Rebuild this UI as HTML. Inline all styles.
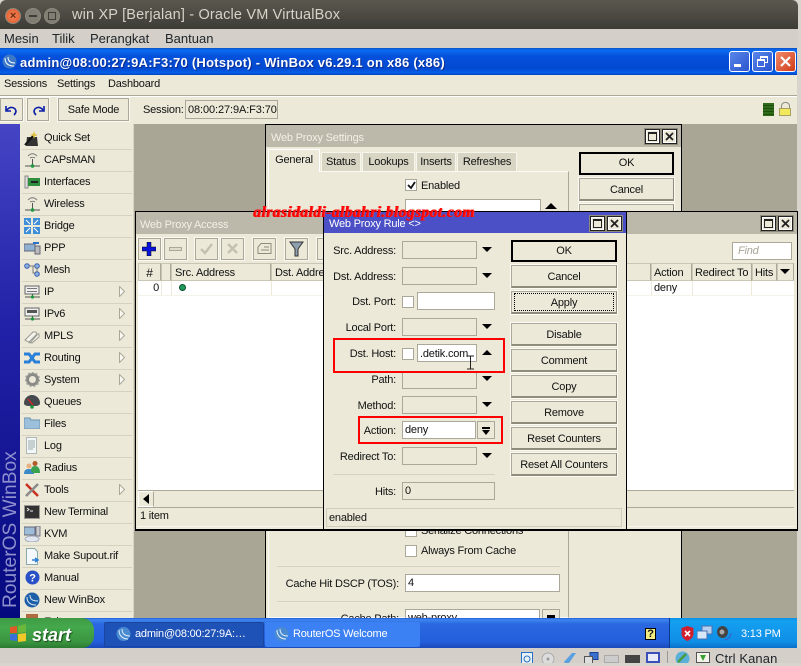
<!DOCTYPE html>
<html><head><meta charset="utf-8"><style>
html,body{margin:0;padding:0}
body{width:801px;height:663px;overflow:hidden;position:relative;background:#d8d5ce;font:11px "Liberation Sans",sans-serif;letter-spacing:-.2px;color:#111}
div,span,svg{position:absolute;box-sizing:border-box}
.t{white-space:nowrap;line-height:14px}
.r{text-align:right}
.c{text-align:center}
.m{left:44px;white-space:nowrap;line-height:14px;color:#111}
.sep{left:22px;width:110px;height:1px;background:#d5d2c2}
.a{left:119px;width:6px;height:11px}
.f{background:#ece9d8;border:1px solid #aca899;height:18px}
.w{background:#fff;border:1px solid #aca899;height:18px}
.b{background:#ece9d8;border:1px solid #aca899;border-right-color:#8f8c7c;border-bottom:2px solid #8f8c7c;box-shadow:0 0 0 1px #fbfaf4;text-align:center;line-height:22px;height:23px;left:511px;width:106px}
.tb{background:#ece9d8;border:1px solid #aca899;box-shadow:0 0 0 1px #f9f8f1;height:22px;top:238px}
.h{top:263px;height:18px;background:#ece9d8;border:1px solid #c9c6b6;border-right-color:#aca899;line-height:18px;padding-left:3px;white-space:nowrap;overflow:hidden}
.ck{background:#fff;border:1px solid #aca899;width:12px;height:12px}
.tri{width:0;height:0;border-left:5px solid transparent;border-right:5px solid transparent;border-top:5px solid #000;left:482px}
.wb{width:15px;height:15px;background:#ece9d8;border:1px solid #222;box-shadow:0 0 0 1px #8f8c7c,inset 0 0 0 1px #fff}
</style></head><body>

<!-- Ubuntu title -->
<div style="left:0;top:0;width:798px;height:29px;background:linear-gradient(#5b584e,#3d3c37);border-radius:6px 6px 0 0"></div>
<div style="left:5px;top:8px;width:16px;height:16px;border-radius:50%;background:radial-gradient(#f4825a,#e05a28);border:1px solid #8d8a80"></div>
<div class="t c" style="left:5px;top:9px;width:16px;font-size:11px;color:#6a2a10;font-weight:bold">×</div>
<div style="left:25px;top:8px;width:16px;height:16px;border-radius:50%;background:#807d72;border:1px solid #8d8a80"></div>
<div style="left:29px;top:15px;width:8px;height:2px;background:#3f3d37"></div>
<div style="left:44px;top:8px;width:16px;height:16px;border-radius:50%;background:#807d72;border:1px solid #8d8a80"></div>
<div style="left:48px;top:12px;width:8px;height:8px;border:1px solid #3f3d37"></div>
<div class="t" style="left:72px;top:7px;font-size:14.5px;color:#d6d3c8;letter-spacing:.17px;line-height:16px">win XP [Berjalan] - Oracle VM VirtualBox</div>

<!-- VB menu -->
<div style="left:0;top:29px;width:798px;height:19px;background:#d4d0c9"></div>
<div class="t" style="left:4px;top:32px;font-size:13px;letter-spacing:0;color:#20262c">Mesin</div>
<div class="t" style="left:52px;top:32px;font-size:13px;letter-spacing:0;color:#20262c">Tilik</div>
<div class="t" style="left:90px;top:32px;font-size:13px;letter-spacing:0;color:#20262c">Perangkat</div>
<div class="t" style="left:165px;top:32px;font-size:13px;letter-spacing:0;color:#20262c">Bantuan</div>

<!-- XP title -->
<div style="left:0;top:48px;width:797px;height:27px;background:linear-gradient(#0a4fc4 0,#0a6cf0 8%,#0551dc 30%,#0349d0 75%,#0560ea 92%,#0440b8 100%)"></div>
<svg style="left:2px;top:54px" width="15" height="15"><circle cx="7.500" cy="7.500" r="7" fill="#3b78c8"/><path d="M3 4c0 5 3 8 9 8M6 3c0 4 2 6 7 6" stroke="#fff" fill="none"/></svg>
<div class="t" style="left:20px;top:56px;font-size:13px;font-weight:bold;color:#fff;text-shadow:1px 1px 0 #0a2c90;letter-spacing:.25px">admin@08:00:27:9A:F3:70 (Hotspot) - WinBox v6.29.1 on x86 (x86)</div>
<div style="left:729px;top:51px;width:21px;height:21px;background:linear-gradient(135deg,#5a86e8,#2a55d0);border:1px solid #fff;border-radius:3px"></div>
<div style="left:734px;top:64px;width:7px;height:3px;background:#fff"></div>
<div style="left:752px;top:51px;width:21px;height:21px;background:linear-gradient(135deg,#5a86e8,#2a55d0);border:1px solid #fff;border-radius:3px"></div>
<div style="left:760px;top:56px;width:8px;height:7px;border:1px solid #fff;border-top-width:2px"></div>
<div style="left:757px;top:59px;width:8px;height:8px;border:1px solid #fff;border-top-width:2px;background:#3e68dc"></div>
<div style="left:775px;top:51px;width:21px;height:21px;background:linear-gradient(135deg,#f08a6a,#d03c18);border:1px solid #fff;border-radius:3px"></div>
<svg style="left:779px;top:55px" width="13" height="13"><path d="M2 2l9 9M11 2l-9 9" stroke="#fff" stroke-width="2.200"/></svg>

<!-- Winbox menu + toolbar -->
<div style="left:0;top:75px;width:797px;height:49px;background:#ece9d8"></div>
<div style="left:0;top:95px;width:797px;height:1px;background:#aca899"></div>
<div style="left:0;top:96px;width:797px;height:1px;background:#fff"></div>
<div class="t" style="left:4px;top:77px">Sessions</div>
<div class="t" style="left:57px;top:77px">Settings</div>
<div class="t" style="left:108px;top:77px">Dashboard</div>
<div style="left:0;top:98px;width:23px;height:23px;border:1px solid #aca899;box-shadow:0 0 0 1px #f9f8f1"></div>
<svg style="left:4px;top:103px" width="15" height="13"><path d="M2 3v5h5M3 7c3-4 8-3 9 1c0 2-1 3-2 4" stroke="#0a1ea8" stroke-width="1.600" fill="none"/></svg>
<div style="left:27px;top:98px;width:22px;height:23px;border:1px solid #aca899;box-shadow:0 0 0 1px #f9f8f1"></div>
<svg style="left:31px;top:103px" width="15" height="13"><path d="M13 3v5h-5M12 7c-3-4-8-3-9 1c0 2 1 3 2 4" stroke="#0a1ea8" stroke-width="1.600" fill="none"/></svg>
<div class="c t" style="left:58px;top:98px;width:71px;height:23px;border:1px solid #aca899;box-shadow:0 0 0 1px #f9f8f1;line-height:22px">Safe Mode</div>
<div class="t" style="left:143px;top:103px">Session:</div>
<div class="t" style="left:185px;top:100px;width:93px;height:19px;border:1px solid #aca899;line-height:18px;padding-left:2px;letter-spacing:-.1px">08:00:27:9A:F3:70</div>
<div style="left:763px;top:103px;width:11px;height:13px;background:repeating-linear-gradient(#2f6a1a 0,#2f6a1a 2px,#1f4f10 2px,#1f4f10 3px)"></div>
<div style="left:781px;top:102px;width:9px;height:9px;border:1.500px solid #8a8a80;border-radius:4px 4px 0 0"></div>
<div style="left:779px;top:108px;width:12px;height:8px;background:#f2e85c;border:1px solid #a8a060"></div>

<!-- MDI -->
<div style="left:134px;top:124px;width:663px;height:494px;background:#a9a696"></div>

<!-- Sidebar -->
<div style="left:0;top:124px;width:20px;height:494px;background:linear-gradient(#4444c4,#2222a8 40%,#05097e)"></div>
<div class="t" style="left:-70px;top:516px;width:162px;height:22px;transform:rotate(-90deg);font-size:19.2px;line-height:22px;color:#8d90cc;text-align:left;letter-spacing:0">RouterOS WinBox</div>
<div style="left:20px;top:124px;width:114px;height:494px;background:#ece9d8;border-right:1px solid #d8d5c4"></div>
<div class="sep" style="top:149px"></div><div class="sep" style="top:171px"></div><div class="sep" style="top:193px"></div><div class="sep" style="top:215px"></div><div class="sep" style="top:237px"></div><div class="sep" style="top:259px"></div><div class="sep" style="top:281px"></div><div class="sep" style="top:303px"></div><div class="sep" style="top:325px"></div><div class="sep" style="top:347px"></div><div class="sep" style="top:369px"></div><div class="sep" style="top:391px"></div><div class="sep" style="top:413px"></div><div class="sep" style="top:435px"></div><div class="sep" style="top:457px"></div><div class="sep" style="top:479px"></div><div class="sep" style="top:501px"></div><div class="sep" style="top:523px"></div><div class="sep" style="top:545px"></div><div class="sep" style="top:567px"></div><div class="sep" style="top:589px"></div><div class="sep" style="top:611px"></div>
<div class="m" style="top:131px">Quick Set</div>
<div class="m" style="top:153px">CAPsMAN</div>
<div class="m" style="top:175px">Interfaces</div>
<div class="m" style="top:197px">Wireless</div>
<div class="m" style="top:219px">Bridge</div>
<div class="m" style="top:241px">PPP</div>
<div class="m" style="top:263px">Mesh</div>
<div class="m" style="top:285px">IP</div>
<div class="m" style="top:307px">IPv6</div>
<div class="m" style="top:329px">MPLS</div>
<div class="m" style="top:351px">Routing</div>
<div class="m" style="top:373px">System</div>
<div class="m" style="top:395px">Queues</div>
<div class="m" style="top:417px">Files</div>
<div class="m" style="top:439px">Log</div>
<div class="m" style="top:461px">Radius</div>
<div class="m" style="top:483px">Tools</div>
<div class="m" style="top:505px">New Terminal</div>
<div class="m" style="top:527px">KVM</div>
<div class="m" style="top:549px">Make Supout.rif</div>
<div class="m" style="top:571px">Manual</div>
<div class="m" style="top:593px">New WinBox</div>
<div class="m" style="top:615px">Exit</div>
<svg class="a" style="top:286px" viewBox="0 0 6 11"><path d="M.5.500L5.500 5.500L.5 10.500Z" fill="#fafaf2" stroke="#aca899"/></svg>
<svg class="a" style="top:308px" viewBox="0 0 6 11"><path d="M.5.500L5.500 5.500L.5 10.500Z" fill="#fafaf2" stroke="#aca899"/></svg>
<svg class="a" style="top:330px" viewBox="0 0 6 11"><path d="M.5.500L5.500 5.500L.5 10.500Z" fill="#fafaf2" stroke="#aca899"/></svg>
<svg class="a" style="top:352px" viewBox="0 0 6 11"><path d="M.5.500L5.500 5.500L.5 10.500Z" fill="#fafaf2" stroke="#aca899"/></svg>
<svg class="a" style="top:374px" viewBox="0 0 6 11"><path d="M.5.500L5.500 5.500L.5 10.500Z" fill="#fafaf2" stroke="#aca899"/></svg>
<svg class="a" style="top:484px" viewBox="0 0 6 11"><path d="M.5.500L5.500 5.500L.5 10.500Z" fill="#fafaf2" stroke="#aca899"/></svg>

<!-- Sidebar icons -->
<svg style="left:24px;top:129px" width="17" height="18"><path d="M3 8h10l1 9H2Z" fill="#333"/><path d="M1 16L9 7" stroke="#111" stroke-width="2"/><path d="M10 2l1 3 3 1-3 1-1 3-1-3-3-1 3-1Z" fill="#e0c040"/></svg>
<svg style="left:24px;top:153px" width="17" height="15"><path d="M4 3c3-3 6-3 9 0M6 5c2-1 3-1 5 0" stroke="#777" fill="none"/><path d="M8.500 6v6M1 13h15" stroke="#555"/><circle cx="8.500" cy="13" r="1.800" fill="#1a9a3a"/></svg>
<svg style="left:24px;top:175px" width="17" height="14"><path d="M1 1h3v12H1z" fill="#ddd" stroke="#888"/><path d="M4 3h12v8H4z" fill="#2f8f3f"/><path d="M7 6h7v2H7z" fill="#222"/></svg>
<svg style="left:24px;top:197px" width="17" height="15"><path d="M4 3c3-3 6-3 9 0M6 5c2-1 3-1 5 0" stroke="#777" fill="none"/><path d="M8.500 6v6M1 13h15" stroke="#555"/><circle cx="8.500" cy="13" r="1.800" fill="#1a9a3a"/></svg>
<svg style="left:24px;top:218px" width="16" height="16"><path d="M0 0h7v7H0zM9 0h7v7H9zM0 9h7v7H0zM9 9h7v7H9z" fill="#3f8fd8"/><path d="M2 2l4 4M14 2l-4 4M2 14l4-4M14 14l-4-4" stroke="#fff"/></svg>
<svg style="left:24px;top:241px" width="17" height="14"><path d="M0 3h11v7H0z" fill="#8fb0d0" stroke="#667"/><path d="M11 5h5v8h-5z" fill="#bbb" stroke="#667"/><path d="M9 2h6" stroke="#2a70c8" stroke-width="2"/></svg>
<svg style="left:24px;top:263px" width="16" height="14"><circle cx="3" cy="3" r="2.300" fill="#8ab0e0" stroke="#3a5fb0"/><circle cx="13" cy="3" r="2.300" fill="#8ab0e0" stroke="#3a5fb0"/><circle cx="13" cy="11" r="2.300" fill="#8ab0e0" stroke="#3a5fb0"/><path d="M5 3h6M13 5v4M9 3v7h2" stroke="#777" fill="none"/></svg>
<svg style="left:24px;top:285px" width="17" height="15"><path d="M1 1h14v8H1z" fill="#eee" stroke="#666"/><path d="M3 3h10v1H3zM3 6h10v1H3z" fill="#777"/><path d="M1 12h15M8.500 9v3" stroke="#555"/><circle cx="8.500" cy="12" r="1.600" fill="#1a9a3a"/></svg>
<svg style="left:24px;top:307px" width="17" height="15"><path d="M1 1h14v8H1z" fill="#eee" stroke="#666"/><path d="M3 3h10v3H3z" fill="#555"/><path d="M1 12h15M8.500 9v3" stroke="#555"/><circle cx="8.500" cy="12" r="1.600" fill="#1a9a3a"/></svg>
<svg style="left:24px;top:329px" width="16" height="15"><path d="M1 11L9 3h3l1 3-7 8zM5 13l8-8h2l0 3-7 6z" fill="#f4f4ec" stroke="#9a9a90"/></svg>
<svg style="left:24px;top:351px" width="17" height="14"><path d="M0 3h5l6 8h5M0 11h5l6-8h5" stroke="#2a80d8" stroke-width="3" fill="none"/></svg>
<svg style="left:25px;top:372px" width="15" height="15"><circle cx="7.500" cy="7.500" r="5" fill="none" stroke="#8a8a86" stroke-width="3"/><circle cx="7.500" cy="7.500" r="7" fill="none" stroke="#a8a8a0" stroke-width="1.500" stroke-dasharray="2 2"/></svg>
<svg style="left:24px;top:394px" width="16" height="15"><path d="M0 9a8 8 0 0 1 16 0c0 3-3 3-8 3s-8 0-8-3z" fill="#454a4e"/><path d="M4 5l5 6" stroke="#e02020" stroke-width="1.300"/><circle cx="8" cy="13" r="1.800" fill="#1a9a3a"/></svg>
<svg style="left:24px;top:416px" width="16" height="13"><path d="M0 2h6l1 2h9v9H0z" fill="#9cc0dc" stroke="#6d93b0"/></svg>
<svg style="left:26px;top:437px" width="12" height="17"><path d="M.5.500h10v16h-10z" fill="#f2f6f6" stroke="#b0b8b8"/><path d="M2 4h7M2 6h7M2 8h7M2 10h7M2 12h5" stroke="#99aaaa"/></svg>
<svg style="left:24px;top:460px" width="17" height="15"><circle cx="5" cy="6" r="2.500" fill="#eab080"/><path d="M0 14c0-4 2-5 5-5s5 1 5 5z" fill="#3a8ac8"/><circle cx="11" cy="3.500" r="2.500" fill="#b05a28"/><path d="M7 11c0-3 1-5 4-5s5 2 5 7H9z" fill="#3aa050"/></svg>
<svg style="left:24px;top:482px" width="16" height="16"><path d="M2 2l12 12" stroke="#c83020" stroke-width="2.500"/><path d="M14 2L2 14" stroke="#8a8a8a" stroke-width="2.500"/></svg>
<svg style="left:24px;top:505px" width="16" height="14"><path d="M.5.500h15v13H.5z" fill="#333" stroke="#9a9a92"/><path d="M3 3l2 1.500L3 6M6 6h3" stroke="#eee" fill="none"/></svg>
<svg style="left:24px;top:526px" width="17" height="16"><path d="M0 1h11v8H0z" fill="#9cbcd8" stroke="#667"/><path d="M12 0h4v10h-4z" fill="#ccc" stroke="#778"/><ellipse cx="8" cy="13" rx="7" ry="3" fill="#dfe6f0" stroke="#a8b0c0"/></svg>
<svg style="left:26px;top:548px" width="14" height="17"><path d="M.5.500h8l3 3v13h-11z" fill="#f4f8fa" stroke="#8aa"/><path d="M6 12h5M9 10l3 2-3 2" stroke="#2a80d8" fill="none" stroke-width="1.500"/></svg>
<svg style="left:25px;top:570px" width="15" height="15"><circle cx="7.500" cy="7.500" r="7" fill="#2a50c8"/><text x="7.500" y="11.500" font-size="11" font-weight="bold" fill="#fff" text-anchor="middle" font-family="Liberation Sans">?</text></svg>
<svg style="left:24px;top:592px" width="16" height="16"><circle cx="8" cy="8" r="7.500" fill="#1e5fa8"/><path d="M3 5c0 5 3 8 9 8M6 3c0 4 2 6 8 6" stroke="#d8e8f8" fill="none"/></svg>
<div style="left:26px;top:614px;width:12px;height:4px;background:#b06a40"></div>

<!-- Web Proxy Settings -->
<div style="left:265px;top:124px;width:417px;height:494px;background:#ece9d8;border:1px solid #000;border-bottom:0"></div>
<div style="left:266px;top:125px;width:415px;height:22px;background:#bdb9aa"></div>
<div class="t" style="left:271px;top:131px;color:#f2f0e6">Web Proxy Settings</div>
<div class="wb" style="left:645px;top:129px"></div><div style="left:648px;top:132px;width:9px;height:9px;border:1px solid #222;border-top-width:2px"></div>
<div class="wb" style="left:662px;top:129px"></div>
<svg style="left:665px;top:132px" width="9" height="9"><path d="M1 1l7 7M8 1L1 8" stroke="#222" stroke-width="1.800"/></svg>
<div style="left:268px;top:171px;width:301px;height:447px;border:1px solid #fbfaf4;border-right-color:#aca899"></div>
<div class="c t" style="left:268px;top:149px;width:52px;height:23px;background:#ece9d8;border:1px solid #fff;border-bottom:0;line-height:21px">General</div>
<div class="c t" style="left:321px;top:152px;width:40px;height:19px;background:#d8d5c4;border:1px solid #f6f5ec;border-bottom:0;line-height:18px">Status</div>
<div class="c t" style="left:362px;top:152px;width:53px;height:19px;background:#d8d5c4;border:1px solid #f6f5ec;border-bottom:0;line-height:18px">Lookups</div>
<div class="c t" style="left:416px;top:152px;width:40px;height:19px;background:#d8d5c4;border:1px solid #f6f5ec;border-bottom:0;line-height:18px">Inserts</div>
<div class="c t" style="left:457px;top:152px;width:60px;height:19px;background:#d8d5c4;border:1px solid #f6f5ec;border-bottom:0;line-height:18px">Refreshes</div>
<div class="ck" style="left:405px;top:179px"></div>
<svg style="left:407px;top:181px" width="9" height="9"><path d="M1 4l3 3 4-6" stroke="#111" stroke-width="1.800" fill="none"/></svg>
<div class="t" style="left:421px;top:179px">Enabled</div>
<div class="w" style="left:405px;top:199px;width:136px;height:13px"></div>
<div style="left:545px;top:203px;width:0;height:0;border-left:6px solid transparent;border-right:6px solid transparent;border-bottom:6px solid #000"></div>
<div class="b" style="left:579px;top:152px;width:95px;border:2px solid #000;box-shadow:none;line-height:19px">OK</div>
<div class="b" style="left:579px;top:178px;width:95px">Cancel</div>
<div class="b" style="left:579px;top:204px;width:95px;height:12px"></div>
<div class="ck" style="left:405px;top:525px"></div>
<div class="t" style="left:421px;top:524px">Serialize Connections</div>
<div class="ck" style="left:405px;top:545px"></div>
<div class="t" style="left:421px;top:544px">Always From Cache</div>
<div style="left:277px;top:566px;width:283px;height:1px;background:#d5d2c2"></div>
<div class="t r" style="left:270px;top:577px;width:129px">Cache Hit DSCP (TOS):</div>
<div class="w t" style="left:405px;top:574px;width:155px;line-height:16px;padding-left:2px">4</div>
<div style="left:277px;top:601px;width:283px;height:1px;background:#d5d2c2"></div>
<div class="t r" style="left:270px;top:612px;width:129px">Cache Path:</div>
<div class="w t" style="left:405px;top:609px;width:135px;padding-left:2px;line-height:16px">web-proxy</div>
<div class="f" style="left:542px;top:609px;width:18px"></div>
<div style="left:547px;top:615px;width:8px;height:3px;background:#000"></div>

<!-- Web Proxy Access -->
<div style="left:135px;top:211px;width:663px;height:320px;background:#ece9d8;border:1px solid #000;border-bottom-width:2px"></div>
<div style="left:136px;top:212px;width:661px;height:22px;background:#bdb9aa"></div>
<div class="t" style="left:140px;top:218px;color:#f2f0e6">Web Proxy Access</div>
<div class="wb" style="left:761px;top:216px"></div><div style="left:764px;top:219px;width:9px;height:9px;border:1px solid #222;border-top-width:2px"></div>
<div class="wb" style="left:778px;top:216px"></div>
<svg style="left:781px;top:219px" width="9" height="9"><path d="M1 1l7 7M8 1L1 8" stroke="#222" stroke-width="1.800"/></svg>
<div class="tb" style="left:138px;width:23px"></div>
<svg style="left:142px;top:242px" width="14" height="14"><path d="M5 0h4v5h5v4H9v5H5V9H0V5h5z" fill="#0a14d8" stroke="#000" stroke-width=".5"/></svg>
<div class="tb" style="left:164px;width:23px"></div>
<div style="left:169px;top:247px;width:13px;height:4px;background:#dfdccb;border:1px solid #aca899"></div>
<div class="tb" style="left:195px;width:23px"></div>
<svg style="left:199px;top:242px" width="15" height="14"><path d="M2 7l4 4 7-9" stroke="#c4c1b0" stroke-width="2.500" fill="none"/></svg>
<div class="tb" style="left:221px;width:23px"></div>
<svg style="left:226px;top:242px" width="13" height="13"><path d="M2 2l9 9M11 2l-9 9" stroke="#c4c1b0" stroke-width="2.500"/></svg>
<div class="tb" style="left:253px;width:23px"></div>
<svg style="left:257px;top:243px" width="15" height="12"><path d="M4 .5h10v10H1V4z" fill="#ece9d8" stroke="#8f8c7c"/><path d="M7 4h5M4 7h8" stroke="#8f8c7c"/></svg>
<div class="tb" style="left:285px;width:23px"></div>
<svg style="left:289px;top:241px" width="15" height="16"><path d="M1 1h13L9 8v7H6V8z" fill="#8f9fb0" stroke="#333"/></svg>
<div class="tb" style="left:317px;width:20px"></div>
<div class="w t" style="left:732px;top:242px;width:60px;font-style:italic;color:#a8a596;padding-left:5px;line-height:17px">Find</div>
<div class="h c" style="left:138px;width:23px;padding:0;font-size:12px">#</div>
<div class="h" style="left:161px;width:10px"></div>
<div class="h" style="left:171px;width:100px">Src. Address</div>
<div class="h" style="left:271px;width:60px">Dst. Address</div>
<div class="h" style="left:600px;width:51px"></div>
<div class="h" style="left:651px;width:41px;padding-left:2px">Action</div>
<div class="h" style="left:692px;width:60px;padding-left:2px">Redirect To</div>
<div class="h" style="left:752px;width:25px;padding-left:2px">Hits</div>
<div class="h" style="left:777px;width:17px"></div>
<div style="left:780px;top:269px;width:0;height:0;border-left:5px solid transparent;border-right:5px solid transparent;border-top:5px solid #000"></div>
<div style="left:138px;top:281px;width:656px;height:209px;background:#fff"></div>
<div style="left:138px;top:295px;width:656px;height:1px;background:#f4f3ea"></div>
<div style="left:161px;top:281px;width:1px;height:14px;background:#ece9d8"></div>
<div style="left:171px;top:281px;width:1px;height:14px;background:#ece9d8"></div>
<div style="left:271px;top:281px;width:1px;height:14px;background:#ece9d8"></div>
<div style="left:651px;top:281px;width:1px;height:14px;background:#ece9d8"></div>
<div style="left:692px;top:281px;width:1px;height:14px;background:#ece9d8"></div>
<div style="left:751px;top:281px;width:1px;height:14px;background:#ece9d8"></div>
<div class="t r" style="left:138px;top:281px;width:21px">0</div>
<div style="left:179px;top:284px;width:7px;height:7px;border-radius:50%;background:#1f9a5a;border:1px solid #0b4f30"></div>
<div class="t" style="left:654px;top:281px">deny</div>
<div style="left:138px;top:490px;width:656px;height:1px;background:#aca899"></div>
<div style="left:138px;top:491px;width:16px;height:16px;background:#ece9d8;border:1px solid #fff;border-right-color:#aca899"></div>
<div style="left:143px;top:494px;width:0;height:0;border-top:5px solid transparent;border-bottom:5px solid transparent;border-right:6px solid #000"></div>
<div style="left:138px;top:507px;width:656px;height:1px;background:#aca899"></div>
<div class="t" style="left:140px;top:509px">1 item</div>
<div style="left:138px;top:526px;width:656px;height:1px;background:#f8f7ee"></div>

<!-- Rule window -->
<div style="left:323px;top:211px;width:304px;height:320px;background:#ece9d8;border:1px solid #000;border-bottom-width:2px"></div>
<div style="left:324px;top:212px;width:302px;height:21px;background:#4b50c6"></div>
<div class="t" style="left:329px;top:217px;color:#fff">Web Proxy Rule &lt;&gt;</div>
<div class="wb" style="left:590px;top:216px"></div><div style="left:593px;top:219px;width:9px;height:9px;border:1px solid #222;border-top-width:2px"></div>
<div class="wb" style="left:607px;top:216px"></div>
<svg style="left:610px;top:219px" width="9" height="9"><path d="M1 1l7 7M8 1L1 8" stroke="#222" stroke-width="1.800"/></svg>

<div class="t r" style="left:326px;top:244px;width:70px">Src. Address:</div>
<div class="f" style="left:402px;top:241px;width:75px"></div><div class="tri" style="top:247px"></div>
<div class="t r" style="left:326px;top:270px;width:70px">Dst. Address:</div>
<div class="f" style="left:402px;top:267px;width:75px"></div><div class="tri" style="top:273px"></div>
<div class="t r" style="left:326px;top:295px;width:70px">Dst. Port:</div>
<div class="ck" style="left:402px;top:296px"></div>
<div class="w" style="left:417px;top:292px;width:78px"></div>
<div class="t r" style="left:326px;top:321px;width:70px">Local Port:</div>
<div class="f" style="left:402px;top:318px;width:75px"></div><div class="tri" style="top:324px"></div>
<div class="t r" style="left:326px;top:347px;width:70px">Dst. Host:</div>
<div class="ck" style="left:402px;top:348px"></div>
<div class="w t" style="left:417px;top:344px;width:60px;line-height:18px;padding-left:2px;overflow:hidden">.detik.com</div>
<div style="left:482px;top:350px;width:0;height:0;border-left:5px solid transparent;border-right:5px solid transparent;border-bottom:5px solid #000"></div>
<svg style="left:466px;top:355px" width="9" height="16"><path d="M1 1h7M4.500 1v13M1 14h7" stroke="#222" fill="none"/></svg>
<div class="t r" style="left:326px;top:373px;width:70px">Path:</div>
<div class="f" style="left:402px;top:371px;width:75px"></div><div class="tri" style="top:376px"></div>
<div class="t r" style="left:326px;top:399px;width:70px">Method:</div>
<div class="f" style="left:402px;top:396px;width:75px"></div><div class="tri" style="top:402px"></div>
<div class="t r" style="left:326px;top:424px;width:70px">Action:</div>
<div class="w t" style="left:402px;top:421px;width:74px;line-height:17px;padding-left:2px">deny</div>
<div class="f" style="left:477px;top:421px;width:18px"></div>
<div style="left:482px;top:427px;width:8px;height:2px;background:#000"></div>
<div style="left:482px;top:430px;width:0;height:0;border-left:4px solid transparent;border-right:4px solid transparent;border-top:5px solid #000"></div>
<div class="t r" style="left:326px;top:450px;width:70px">Redirect To:</div>
<div class="f" style="left:402px;top:447px;width:75px"></div><div class="tri" style="top:453px"></div>
<div style="left:333px;top:474px;width:162px;height:1px;background:#d5d2c2"></div>
<div class="t r" style="left:326px;top:485px;width:70px">Hits:</div>
<div class="f t" style="left:402px;top:482px;width:93px;line-height:17px;padding-left:2px">0</div>
<div class="t" style="left:326px;top:508px;width:296px;height:19px;border:1px solid #d0cdbc;line-height:18px;padding-left:2px">enabled</div>

<div class="b" style="top:240px;height:22px;border:2px solid #000;box-shadow:none;line-height:19px">OK</div>
<div class="b" style="top:265px">Cancel</div>
<div class="b" style="top:291px">Apply</div>
<div style="left:514px;top:293px;width:100px;height:18px;border:1px dotted #000"></div>
<div class="b" style="top:323px">Disable</div>
<div class="b" style="top:349px">Comment</div>
<div class="b" style="top:375px">Copy</div>
<div class="b" style="top:401px">Remove</div>
<div class="b" style="top:427px">Reset Counters</div>
<div class="b" style="top:453px">Reset All Counters</div>

<!-- Red rectangles -->
<div style="left:333px;top:338px;width:172px;height:35px;border:2px solid #f00"></div>
<div style="left:358px;top:416px;width:145px;height:28px;border:2px solid #f00"></div>

<!-- Watermark -->
<div class="t" style="left:253px;top:205px;font:italic bold 15.5px/16px 'Liberation Serif',serif;color:#f00;text-shadow:1px 0 0 #ff3030;white-space:nowrap;letter-spacing:.44px">alrasidaldi-albahri.blogspot.com</div>

<!-- Taskbar -->
<div style="left:0;top:618px;width:797px;height:30px;background:linear-gradient(#1f5ed8 0,#3f86f0 6%,#2a68e0 20%,#245edb 80%,#1a48b8 100%)"></div>
<div style="left:0;top:618px;width:94px;height:30px;background:linear-gradient(#3f9a45,#45a84c 30%,#3a9540 80%,#2a7a30);border-radius:0 12px 12px 0"></div>
<svg style="left:9px;top:624px" width="19" height="19"><path d="M1 3l7-1v7H1z" fill="#e05a28"/><path d="M9 2l8-2v8l-8 1z" fill="#6ab83a"/><path d="M1 10h7v7l-7-1z" fill="#3a70d8"/><path d="M9 10l8-1v8l-8 1z" fill="#f0c828"/></svg>
<div class="t" style="left:32px;top:625px;font:italic bold 18px/20px 'Liberation Sans',sans-serif;letter-spacing:0;color:#fff;text-shadow:1px 1px 1px #1a4a1a">start</div>
<div style="left:104px;top:622px;width:160px;height:25px;background:#1e52b7;border:1px solid #1a459e;border-radius:2px"></div>
<svg style="left:116px;top:626px" width="15" height="16"><circle cx="7.500" cy="8" r="7" fill="#4a8ad0"/><path d="M3 4c0 5 3 9 9 9M6 3c0 4 2 7 8 7" stroke="#e0f0ff" fill="none"/></svg>
<div class="t" style="left:135px;top:627px;color:#fff">admin@08:00:27:9A:…</div>
<div style="left:265px;top:622px;width:155px;height:25px;background:#3c81f3;border-radius:2px"></div>
<svg style="left:274px;top:626px" width="15" height="16"><circle cx="7.500" cy="8" r="7" fill="#4a8ad0"/><path d="M3 4c0 5 3 9 9 9M6 3c0 4 2 7 8 7" stroke="#e0f0ff" fill="none"/></svg>
<div class="t" style="left:293px;top:627px;color:#fff">RouterOS Welcome</div>
<div style="left:645px;top:628px;width:11px;height:12px;background:#f4ec80;border:1px solid #000"></div>
<div class="t c" style="left:645px;top:627px;width:11px;font-weight:bold">?</div>
<div style="left:669px;top:618px;width:128px;height:30px;background:linear-gradient(#0c8fe8,#14a0f0 10%,#0f8ee6 80%,#0a70c8);border-left:1px solid #0a3a90"></div>
<svg style="left:681px;top:626px" width="13" height="15"><path d="M6.500 0l6 2v6c0 3-3 6-6 7-3-1-6-4-6-7V2z" fill="#d02030"/><path d="M4 5l5 5M9 5l-5 5" stroke="#fff" stroke-width="1.600"/></svg>
<svg style="left:697px;top:625px" width="16" height="16"><path d="M5 1h10v8H5z" fill="#b8d0f0" stroke="#4a70b0"/><path d="M0 6h10v8H0z" fill="#d8e8f8" stroke="#4a70b0"/></svg>
<svg style="left:716px;top:626px" width="16" height="15"><ellipse cx="6.500" cy="6" rx="5.500" ry="6" fill="#444"/><circle cx="6" cy="6" r="2.500" fill="#aaa"/><path d="M15 7c0 3-2 6-6 7" stroke="#3a60c8" fill="none"/></svg>
<div class="t" style="left:741px;top:627px;color:#fff">3:13 PM</div>

<!-- Bottom strip -->
<div style="left:0;top:648px;width:801px;height:15px;background:#d4d0c9"></div>
<svg style="left:521px;top:652px" width="12" height="11"><path d="M.5.500h11v11H.5z" fill="#e8f0f8" stroke="#2a70c0"/><circle cx="6" cy="7" r="3" fill="none" stroke="#2a70c0"/></svg>
<svg style="left:541px;top:652px" width="14" height="11"><circle cx="7" cy="7" r="6" fill="#ddd" stroke="#aaa"/><circle cx="7" cy="7" r="1.500" fill="#999"/></svg>
<svg style="left:563px;top:652px" width="14" height="11"><path d="M1 10l8-9h4L6 11H2z" fill="#5aa0e0"/></svg>
<svg style="left:584px;top:652px" width="15" height="11"><path d="M6 .5h8v7H6z" fill="#3a70d0" stroke="#1a4090"/><path d="M.5 4.500h8v7h-8z" fill="#ddd" stroke="#555"/></svg>
<div style="left:604px;top:655px;width:15px;height:8px;background:#ccc;border:1px solid #aaa"></div>
<div style="left:625px;top:655px;width:15px;height:8px;background:#444"></div>
<div style="left:646px;top:652px;width:14px;height:11px;background:#e8eaf8;border:2px solid #3a50b8"></div>
<div style="left:667px;top:651px;width:1px;height:12px;background:#999"></div>
<svg style="left:675px;top:651px" width="15" height="12"><circle cx="7.500" cy="7.500" r="7" fill="#5ab0d8"/><path d="M3 11l8-8" stroke="#4a9a40" stroke-width="2.500"/></svg>
<div style="left:696px;top:652px;width:14px;height:11px;background:#f4f4ec;border:1px solid #555"></div>
<div style="left:700px;top:655px;width:0;height:0;border-left:3px solid transparent;border-right:3px solid transparent;border-top:6px solid #3aa030"></div>
<div class="t" style="left:715px;top:651px;font-size:13px;letter-spacing:.1px;color:#20262c;line-height:15px">Ctrl Kanan</div>

</body></html>
